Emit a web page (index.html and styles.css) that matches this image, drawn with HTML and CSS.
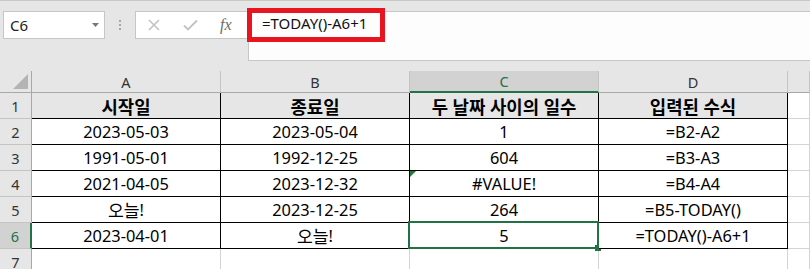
FILE: index.html
```html
<!DOCTYPE html>
<html lang="ko">
<head>
<meta charset="utf-8">
<title>Sheet1</title>
<link rel="stylesheet" href="styles.css">
</head>
<body>
<div class="app">
  <div class="formula-row">
    <div class="name-box">
      <span class="name-text">C6</span>
      <svg class="name-arrow" width="7" height="4" viewBox="0 0 7 4"><polygon points="0,0 7,0 3.5,4" fill="#777"/></svg>
    </div>
    <div class="grip"><i></i><i></i><i></i></div>
    <div class="fx-buttons">
      <svg class="btn-cancel" width="12" height="12" viewBox="0 0 12 12"><path d="M1 1 L11 11 M11 1 L1 11" stroke="#c2c2c2" stroke-width="1.6" fill="none"/></svg>
      <svg class="btn-enter" width="15" height="12" viewBox="0 0 15 12"><path d="M1 6.5 L5 10.5 L14 1.5" stroke="#c2c2c2" stroke-width="1.8" fill="none"/></svg>
      <span class="btn-fx">fx</span>
    </div>
    <div class="formula-input">
      <span class="formula-text">=TODAY()-A6+1</span>
      <span class="callout"></span>
    </div>
  </div>

  <div class="sheet">
    <div class="hd corner"><svg width="15" height="15" viewBox="0 0 15 15"><polygon points="15,0 15,15 0,15" fill="#b4b4b4"/></svg></div>
    <div class="hd col">A</div>
    <div class="hd col">B</div>
    <div class="hd col active-col">C</div>
    <div class="hd col">D</div>
    <div class="hd col">&nbsp;</div>

    <div class="hd row">1</div>
    <div class="c t title"><span class="ko">시작일</span></div>
    <div class="c t title"><span class="ko">종료일</span></div>
    <div class="c t title"><span class="ko">두 날짜 사이의 일수</span></div>
    <div class="c t title"><span class="ko">입력된 수식</span></div>
    <div class="c"></div>

    <div class="hd row">2</div>
    <div class="c t">2023-05-03</div>
    <div class="c t">2023-05-04</div>
    <div class="c t">1</div>
    <div class="c t">=B2-A2</div>
    <div class="c"></div>

    <div class="hd row">3</div>
    <div class="c t">1991-05-01</div>
    <div class="c t">1992-12-25</div>
    <div class="c t">604</div>
    <div class="c t">=B3-A3</div>
    <div class="c"></div>

    <div class="hd row">4</div>
    <div class="c t">2021-04-05</div>
    <div class="c t">2023-12-32</div>
    <div class="c t flagged">#VALUE!<span class="error-flag"></span></div>
    <div class="c t">=B4-A4</div>
    <div class="c"></div>

    <div class="hd row">5</div>
    <div class="c t"><span class="ko">오늘</span>!</div>
    <div class="c t">2023-12-25</div>
    <div class="c t">264</div>
    <div class="c t">=B5-TODAY()</div>
    <div class="c"></div>

    <div class="hd row active-row">6</div>
    <div class="c t">2023-04-01</div>
    <div class="c t"><span class="ko">오늘</span>!</div>
    <div class="c t selected">5<span class="selection"><span class="fill-handle"></span></span></div>
    <div class="c t">=TODAY()-A6+1</div>
    <div class="c"></div>

    <div class="hd row">7</div>
    <div class="c"></div>
    <div class="c"></div>
    <div class="c"></div>
    <div class="c"></div>
    <div class="c"></div>
  </div>
</div>
</body>
</html>
```

FILE: styles.css
```css
* {
  box-sizing: border-box;
}

html, body {
  margin: 0;
  padding: 0;
}

body {
  width: 810px;
  height: 269px;
  overflow: hidden;
  background: #e6e6e6;
  font-family: "Noto Sans", "Noto Sans CJK KR", sans-serif;
  color: #000;
}

.app {
  display: flex;
  flex-direction: column;
}

/* ---------- formula bar ---------- */
.formula-row {
  height: 71px;
  border-top: 1px solid #c8c8c8;
  padding-top: 10px;
  display: flex;
  align-items: flex-start;
}

.name-box {
  margin-left: 3px;
  width: 102px;
  height: 28px;
  background: #fff;
  border: 1px solid #c6c6c6;
  display: flex;
  align-items: center;
  padding-left: 6px;
  padding-right: 5px;
}

.name-text {
  flex: 1;
  font-size: 15px;
  color: #222;
  line-height: 1;
}

.grip {
  width: 30px;
  height: 28px;
  display: flex;
  flex-direction: column;
  align-items: center;
  justify-content: center;
  gap: 2px;
}

.grip i {
  display: block;
  width: 2px;
  height: 2px;
  background: #a6a6a6;
}

.fx-buttons {
  width: 113px;
  height: 28px;
  background: #fff;
  border: 1px solid #c6c6c6;
  display: flex;
  align-items: center;
}

.btn-cancel {
  margin-left: 12px;
}

.btn-enter {
  margin-left: 23px;
}

.btn-fx {
  margin-left: 22px;
  font-family: "Liberation Serif", serif;
  font-style: italic;
  font-size: 16px;
  color: #6b6b6b;
  line-height: 1;
}

.formula-input {
  position: relative;
  flex: 1;
  height: 50px;
  background: #fdfdfd;
  border: 1px solid #c6c6c6;
  border-right: none;
  padding-left: 13px;
}

.formula-text {
  display: block;
  font-size: 15px;
  line-height: 23px;
  color: #111;
}

/* red annotation frame around the formula */
.callout {
  position: absolute;
  left: -2px;
  top: -4px;
  width: 138px;
  height: 34px;
  border: 5px solid #e8141f;
}

/* ---------- worksheet grid ---------- */
.sheet {
  display: grid;
  grid-template-columns: 32px 189px 189px 189px 189px 1fr;
  grid-template-rows: 22px repeat(6, 26px) 26px;
}

.hd {
  background: #e6e6e6;
  color: #333;
  font-size: 14.5px;
  display: flex;
  align-items: center;
  justify-content: center;
  border-right: 1px solid #c4c4c4;
  border-bottom: 1px solid #c4c4c4;
}

.corner {
  justify-content: flex-end;
  align-items: flex-end;
  padding: 0 3px 3px 0;
  border-right-color: #a8a8a8;
  border-bottom-color: #a8a8a8;
}

.col {
  border-bottom-color: #a8a8a8;
}

.row {
  border-right-color: #a8a8a8;
}

.active-col {
  background: #d2d2d2;
  color: #217346;
  border-bottom: 2px solid #217346;
}

.active-row {
  background: #d2d2d2;
  color: #217346;
  border-right: 2px solid #217346;
}

.c {
  background: #fff;
  border-right: 1px solid #d4d4d4;
  border-bottom: 1px solid #d4d4d4;
}

.t {
  position: relative;
  display: flex;
  align-items: center;
  justify-content: center;
  font-size: 16.4px;
  white-space: nowrap;
  border-right-color: #000;
  border-bottom-color: #000;
}

/* Hangul glyphs run a little larger than the Latin ones */
.ko {
  font-size: 17.2px;
}

.title {
  background: #e7e6e6;
  font-weight: 700;
}

.title .ko {
  font-size: 17.8px;
}

/* green error indicator in the cell corner */
.error-flag {
  position: absolute;
  left: 0;
  top: 0;
  width: 0;
  height: 0;
  border-top: 6px solid #1d7a37;
  border-right: 6px solid transparent;
}

/* active cell frame */
.selection {
  position: absolute;
  left: -2px;
  top: -2px;
  right: -1px;
  bottom: -1px;
  border: 2px solid #217346;
}

.fill-handle {
  position: absolute;
  right: -4px;
  bottom: -4px;
  width: 6px;
  height: 6px;
  background: #217346;
}
```
